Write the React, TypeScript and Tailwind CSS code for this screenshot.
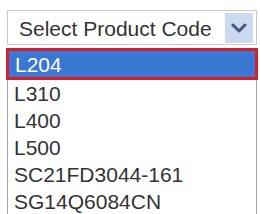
import React from 'react';

const codes = ['L204', 'L310', 'L400', 'L500', 'SC21FD3044-161', 'SG14Q6084CN'];

export default function App() {
  return (
    <div className="w-[260px] h-[214px] overflow-hidden bg-white pt-[10px] pl-[7px] font-['Liberation_Sans',Arial,sans-serif] text-[21px] text-[#333]">
      <div className="w-[250px] h-[35px] border border-[#c9c9c9] flex items-center bg-white">
        <span className="pl-[11px] pt-[1px] leading-none">Select Product Code</span>
        <div className="ml-auto mr-[3px] w-[28px] h-[30px] bg-[#cbd9f1] flex items-center justify-center">
          <svg width="16" height="10" viewBox="0 0 16 10">
            <path d="M2 2 L8 8 L14 2" fill="none" stroke="#4a5677" strokeWidth="3" strokeLinecap="round" strokeLinejoin="round" />
          </svg>
        </div>
      </div>
      <div className="mt-[3px] w-[250px] border-l border-r border-[#a5a5a5]">
        {codes.map((c, i) =>
          i === 0 ? (
            <div key={c} className="-ml-[2px] -mr-[2px] border-[3px] border-[#d4202c] bg-[#3a77d3] text-white h-[32px] flex items-center pl-[6px] leading-none">
              {c}
            </div>
          ) : (
            <div key={c} className="h-[27px] flex items-center pl-[6px] leading-none">
              {c}
            </div>
          )
        )}
      </div>
    </div>
  );
}
